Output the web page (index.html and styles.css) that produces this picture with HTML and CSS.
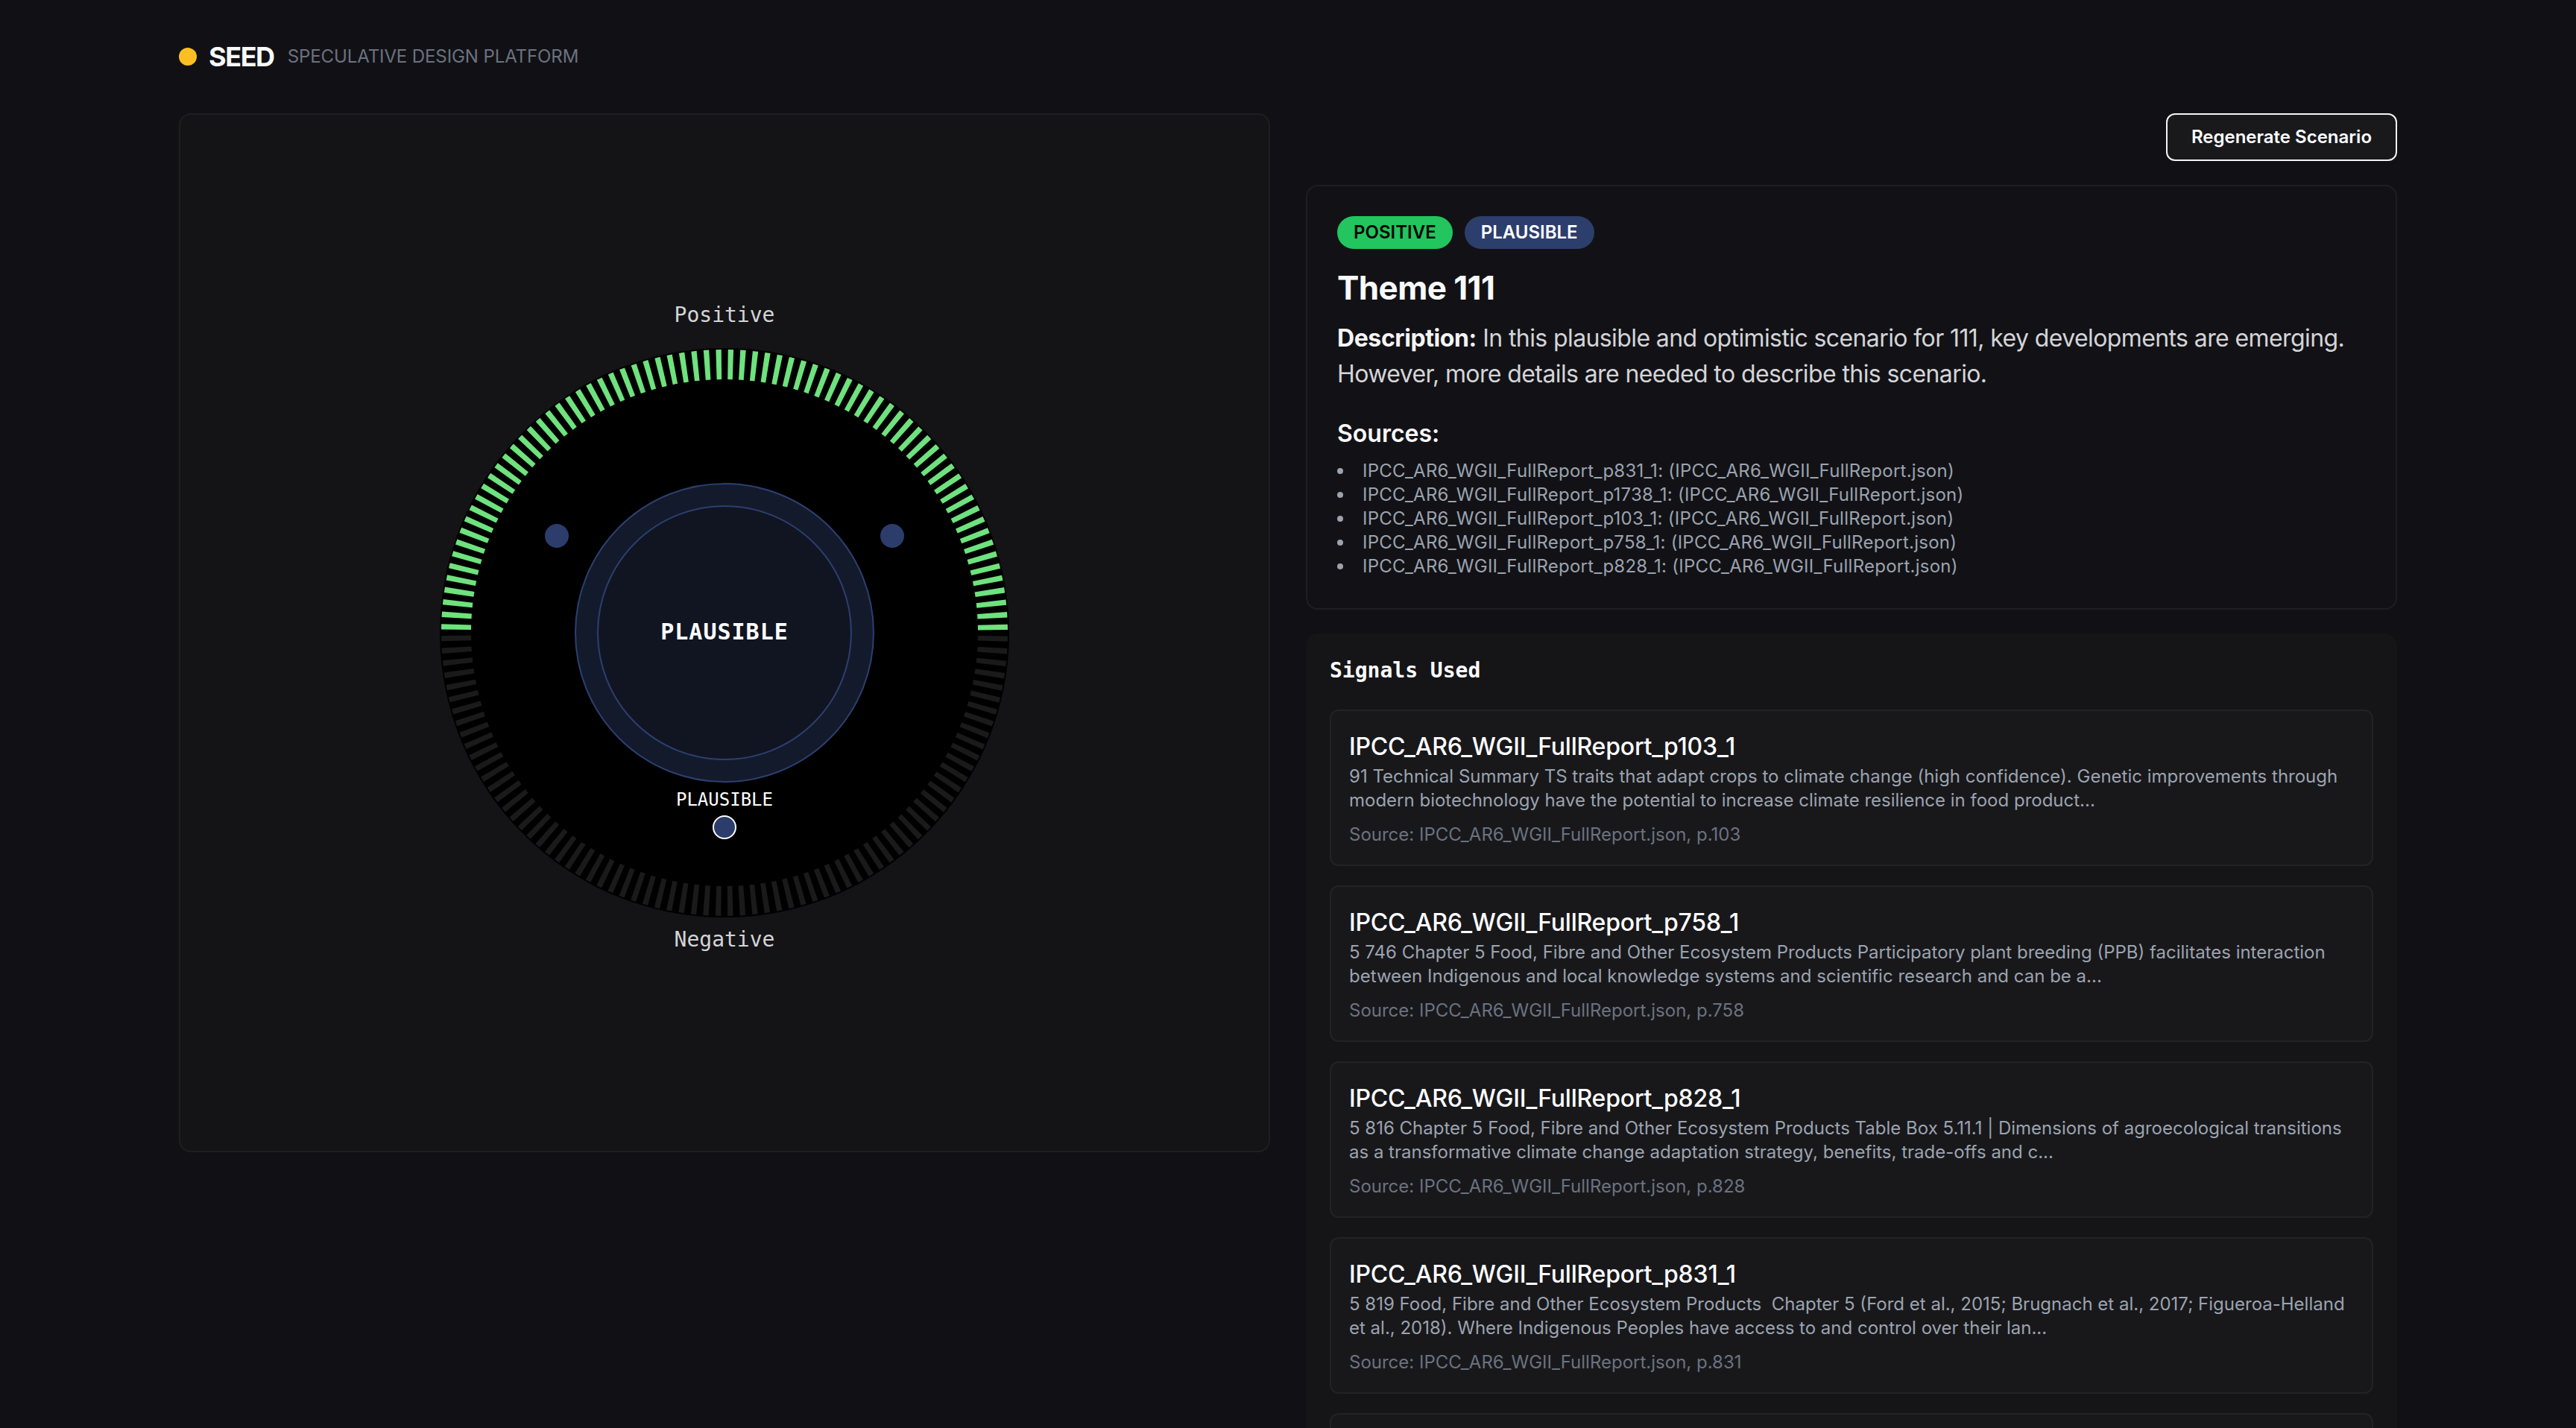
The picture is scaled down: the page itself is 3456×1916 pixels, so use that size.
FILE: index.html
```html
<!DOCTYPE html>
<html lang="en">
<head>
<meta charset="utf-8">
<title>SEED — Speculative Design Platform</title>
<link rel="stylesheet" href="styles.css">
</head>
<body>
<div class="page">
  <header class="brand">
    <span class="brand-dot"></span>
    <span class="brand-name">SEED</span>
    <span class="brand-sub">SPECULATIVE DESIGN PLATFORM</span>
  </header>

  <main class="layout">
    <section class="dial-panel">
      <svg class="dial" width="900" height="900" viewBox="0 0 900 900">
        <text class="axis-label" x="450" y="33" text-anchor="middle">Positive</text>
        <circle class="dial-disc" cx="450" cy="450" r="382"/>
        <path class="ticks ticks-on" d="M 90 450 A 360 360 0 0 1 810 450"/>
        <path class="ticks ticks-off" d="M 810 450 A 360 360 0 0 1 90 450"/>
        <circle class="side-dot" cx="225" cy="320" r="16"/>
        <circle class="side-dot" cx="675" cy="320" r="16"/>
        <circle class="core-outer" cx="450" cy="450" r="200"/>
        <circle class="core-inner" cx="450" cy="450" r="170"/>
        <text class="core-label" x="450" y="459" text-anchor="middle">PLAUSIBLE</text>
        <text class="marker-label" x="450" y="682" text-anchor="middle">PLAUSIBLE</text>
        <circle class="marker" cx="450" cy="711" r="15"/>
        <text class="axis-label" x="450" y="871" text-anchor="middle">Negative</text>
      </svg>
    </section>

    <section class="detail">
      <div class="actions">
        <button class="btn" type="button">Regenerate Scenario</button>
      </div>

      <article class="scenario-card">
        <div class="badges">
          <span class="badge badge-positive">POSITIVE</span>
          <span class="badge badge-plausible">PLAUSIBLE</span>
        </div>
        <h1 class="scenario-title">Theme 111</h1>
        <p class="scenario-desc"><strong class="desc-label">Description:</strong> In this plausible and optimistic scenario for 111, key developments are emerging. However, more details are needed to describe this scenario.</p>
        <h2 class="sources-title">Sources:</h2>
        <ul class="sources">
          <li>IPCC_AR6_WGII_FullReport_p831_1: (IPCC_AR6_WGII_FullReport.json)</li>
          <li>IPCC_AR6_WGII_FullReport_p1738_1: (IPCC_AR6_WGII_FullReport.json)</li>
          <li>IPCC_AR6_WGII_FullReport_p103_1: (IPCC_AR6_WGII_FullReport.json)</li>
          <li>IPCC_AR6_WGII_FullReport_p758_1: (IPCC_AR6_WGII_FullReport.json)</li>
          <li>IPCC_AR6_WGII_FullReport_p828_1: (IPCC_AR6_WGII_FullReport.json)</li>
        </ul>
      </article>

      <section class="signals">
        <h2 class="signals-title">Signals Used</h2>
        <div class="signal-list">
          <article class="signal-card">
            <h3 class="signal-name">IPCC_AR6_WGII_FullReport_p103_1</h3>
            <p class="signal-text">91 Technical Summary TS traits that adapt crops to climate change (high confidence). Genetic improvements through modern biotechnology have the potential to increase climate resilience in food product...</p>
            <p class="signal-source">Source: IPCC_AR6_WGII_FullReport.json, p.103</p>
          </article>
          <article class="signal-card">
            <h3 class="signal-name">IPCC_AR6_WGII_FullReport_p758_1</h3>
            <p class="signal-text">5 746 Chapter 5 Food, Fibre and Other Ecosystem Products Participatory plant breeding (PPB) facilitates interaction between Indigenous and local knowledge systems and scientific research and can be a...</p>
            <p class="signal-source">Source: IPCC_AR6_WGII_FullReport.json, p.758</p>
          </article>
          <article class="signal-card">
            <h3 class="signal-name">IPCC_AR6_WGII_FullReport_p828_1</h3>
            <p class="signal-text">5 816 Chapter 5 Food, Fibre and Other Ecosystem Products Table Box 5.11.1 | Dimensions of agroecological transitions as a transformative climate change adaptation strategy, benefits, trade-offs and c...</p>
            <p class="signal-source">Source: IPCC_AR6_WGII_FullReport.json, p.828</p>
          </article>
          <article class="signal-card">
            <h3 class="signal-name">IPCC_AR6_WGII_FullReport_p831_1</h3>
            <p class="signal-text">5 819 Food, Fibre and Other Ecosystem Products&nbsp; Chapter 5 (Ford et al., 2015; Brugnach et al., 2017; Figueroa-Helland et al., 2018). Where Indigenous Peoples have access to and control over their lan...</p>
            <p class="signal-source">Source: IPCC_AR6_WGII_FullReport.json, p.831</p>
          </article>
          <article class="signal-card">
            <h3 class="signal-name">IPCC_AR6_WGII_FullReport_p1738_1</h3>
            <p class="signal-text">Cross-Chapter Paper 5 Mountains adaptation options for food systems in mountain regions and their potential to reduce climate risk...</p>
            <p class="signal-source">Source: IPCC_AR6_WGII_FullReport.json, p.1738</p>
          </article>
        </div>
      </section>
    </section>
  </main>
</div>
</body>
</html>
```

FILE: styles.css
```css
* { box-sizing: border-box; }

html, body {
  margin: 0;
  padding: 0;
  background: #111115;
  color: #e5e7eb;
  font-family: Inter, "Noto Sans", "Liberation Sans", sans-serif;
}

.page {
  padding: 48px 240px 0;
}

/* Header */
.brand {
  height: 56px;
  display: flex;
  align-items: center;
  margin-bottom: 48px;
}
.brand-dot {
  width: 24px;
  height: 24px;
  border-radius: 50%;
  background: #fbbf24;
  margin-right: 16px;
}
.brand-name {
  font-size: 36px;
  line-height: 56px;
  font-weight: 700;
  color: #f9fafb;
  letter-spacing: -1.4px;
  margin-right: 18px;
}
.brand-sub {
  font-size: 24px;
  line-height: 32px;
  color: #6b7280;
  letter-spacing: -0.1px;
}

/* Layout */
.layout {
  display: grid;
  grid-template-columns: 1fr 1fr;
  gap: 48px;
  align-items: start;
}

/* Dial panel */
.dial-panel {
  height: 1394px;
  background: #141416;
  border: 2px solid #1f1f23;
  border-radius: 16px;
  display: flex;
  align-items: center;
  justify-content: center;
}
.dial { display: block; }
.dial-disc { fill: #000; }
.ticks {
  fill: none;
  stroke-width: 40;
  stroke-dasharray: 7 8.708;
  stroke-dashoffset: 11.354;
}
.ticks-on { stroke: #6ee27d; }
.ticks-off { stroke: #1a1a1a; }
.side-dot { fill: #2c3d6b; }
.core-outer { fill: #131a2b; stroke: #2c3f70; stroke-width: 2; }
.core-inner { fill: #111522; stroke: #2c3f70; stroke-width: 2; }
.axis-label {
  font-family: "DejaVu Sans Mono", "Liberation Mono", monospace;
  font-size: 28px;
  fill: #d4d4d8;
}
.core-label {
  font-family: "DejaVu Sans Mono", "Liberation Mono", monospace;
  font-size: 30px;
  font-weight: 700;
  fill: #ffffff;
  letter-spacing: 1px;
}
.marker-label {
  font-family: "DejaVu Sans Mono", "Liberation Mono", monospace;
  font-size: 24px;
  fill: #ffffff;
}
.marker { fill: #2c3d6b; stroke: #ffffff; stroke-width: 2; }

/* Right column */
.actions {
  display: flex;
  justify-content: flex-end;
}
.btn {
  font-family: inherit;
  font-size: 24px;
  line-height: 32px;
  font-weight: 600;
  color: #ffffff;
  background: #19191c;
  border: 2px solid #f4f4f5;
  border-radius: 12px;
  padding: 14px 32px;
}

.scenario-card {
  margin-top: 32px;
  background: #121216;
  border: 2px solid #1e1e23;
  border-radius: 16px;
  padding: 40px;
}
.badges {
  display: flex;
  gap: 16px;
}
.badge {
  font-size: 24px;
  line-height: 32px;
  font-weight: 600;
  padding: 6px 22px;
  border-radius: 999px;
}
.badge-positive { background: #22c55e; color: #050505; }
.badge-plausible { background: #2c3e6c; color: #ffffff; }

.scenario-title {
  margin: 24px 0 0;
  font-size: 44px;
  line-height: 56px;
  font-weight: 700;
  color: #f9fafb;
  letter-spacing: -0.6px;
}
.scenario-desc {
  margin: 16px 0 0;
  font-size: 32px;
  line-height: 48px;
  color: #d4d4d8;
  letter-spacing: -0.6px;
}
.desc-label {
  font-weight: 700;
  color: #f4f4f5;
  letter-spacing: -0.4px;
}
.sources-title {
  margin: 32px 0 0;
  font-size: 32px;
  line-height: 48px;
  font-weight: 600;
  color: #f9fafb;
}
.sources {
  margin: 10px 0 0;
  padding: 0;
  list-style: none;
  font-size: 24px;
  line-height: 32px;
  color: #9ca3af;
  letter-spacing: 0.25px;
}
.sources li {
  display: flex;
  align-items: center;
}
.sources li::before {
  content: "";
  flex: none;
  width: 8px;
  height: 8px;
  border-radius: 50%;
  background: #9ca3af;
  margin-right: 26px;
}

/* Signals */
.signals {
  margin-top: 32px;
  background: #151518;
  border-radius: 16px;
  padding: 30px 32px 32px;
}
.signals-title {
  margin: 0;
  font-family: "DejaVu Sans Mono", "Liberation Mono", monospace;
  font-size: 28px;
  line-height: 40px;
  font-weight: 700;
  color: #ffffff;
}
.signal-list {
  margin-top: 32px;
  display: flex;
  flex-direction: column;
  gap: 26px;
}
.signal-card {
  background: #18181b;
  border: 2px solid #232327;
  border-radius: 12px;
  padding: 24px;
}
.signal-name {
  margin: 0;
  font-size: 32px;
  line-height: 48px;
  font-weight: 500;
  color: #ffffff;
  letter-spacing: -0.2px;
}
.signal-text {
  margin: 0;
  font-size: 24px;
  line-height: 32px;
  color: #9ca3af;
}
.signal-source {
  margin: 14px 0 0;
  font-size: 24px;
  line-height: 32px;
  color: #6b7280;
}
```
